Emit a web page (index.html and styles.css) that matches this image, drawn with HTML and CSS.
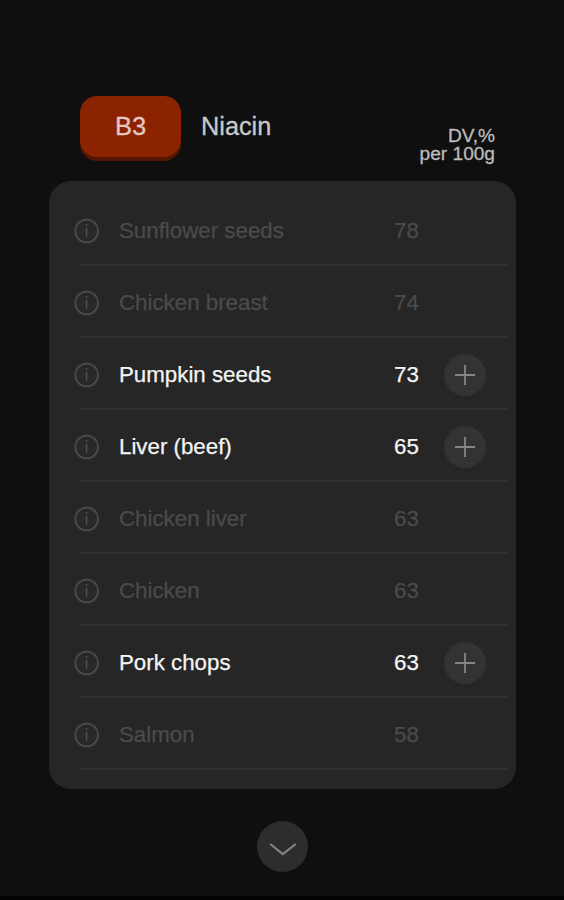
FILE: index.html
```html
<!DOCTYPE html>
<html lang="en">
<head>
<meta charset="utf-8">
<title>Niacin</title>
<link rel="stylesheet" href="styles.css">
</head>
<body>
<svg class="defs" width="0" height="0">
  <symbol id="info" viewBox="0 0 26 26"><circle cx="12.6" cy="13" r="11.4"/><path d="M12.6 9.7V18.7M12.6 5.9V7.9"/></symbol>
  <symbol id="plus" viewBox="0 0 42 42"><path d="M11 21H31M21 11V31"/></symbol>
</svg>
<main class="screen">
  <header class="header">
    <span class="badge">B3</span>
    <h1 class="title">Niacin</h1>
    <p class="unit">DV,%<br>per 100g</p>
  </header>
  <ul class="list">
    <li class="row"><svg class="info"><use href="#info"/></svg><span class="name">Sunflower seeds</span><span class="value">78</span></li>
    <li class="row"><svg class="info"><use href="#info"/></svg><span class="name">Chicken breast</span><span class="value">74</span></li>
    <li class="row active"><svg class="info"><use href="#info"/></svg><span class="name">Pumpkin seeds</span><span class="value">73</span><button class="add" aria-label="Add"><svg><use href="#plus"/></svg></button></li>
    <li class="row active"><svg class="info"><use href="#info"/></svg><span class="name">Liver (beef)</span><span class="value">65</span><button class="add" aria-label="Add"><svg><use href="#plus"/></svg></button></li>
    <li class="row"><svg class="info"><use href="#info"/></svg><span class="name">Chicken liver</span><span class="value">63</span></li>
    <li class="row"><svg class="info"><use href="#info"/></svg><span class="name">Chicken</span><span class="value">63</span></li>
    <li class="row active"><svg class="info"><use href="#info"/></svg><span class="name">Pork chops</span><span class="value">63</span><button class="add" aria-label="Add"><svg><use href="#plus"/></svg></button></li>
    <li class="row"><svg class="info"><use href="#info"/></svg><span class="name">Salmon</span><span class="value">58</span></li>
  </ul>
  <button class="more" aria-label="More"><svg viewBox="0 0 50 50"><path d="M13 22.5L25.3 32.5L38 22.5"/></svg></button>
</main>
</body>
</html>
```
FILE: styles.css
```css
* { box-sizing: border-box; }
body { margin: 0; background: #0f0f0f; font-family: "Liberation Sans", Arial, sans-serif; }
.defs { display: block; }
.screen { height: 900px; padding: 96px 48px 0 49px; border-bottom: 4px solid #050204; overflow: hidden; }
.header { display: flex; height: 85px; padding: 0 21px 0 31px; -webkit-text-stroke: .3px; }
.badge { width: 101px; height: 61px; border-radius: 17px; background: #8b2200; box-shadow: 0 4px 0 #521602; color: #e6c6c3; font-size: 25.5px; line-height: 61px; text-align: center; }
.title { margin: 0 0 0 20px; color: #c8c8c8; font-size: 25.3px; font-weight: 400; line-height: 61px; }
.unit { margin: 31px 0 0 auto; color: #bcbcbc; font-size: 19.1px; line-height: 18px; text-align: right; }
.list { height: 608px; margin: 0; padding: 13px 0 0; border-radius: 22px; background: #262626; list-style: none; }
.row { display: grid; grid-template-columns: 26px 274px 50px 42px; align-items: center; height: 72px; padding: 2px 0 0 25px; color: #4b4b4b; font-size: 22.3px; line-height: 26px; background: linear-gradient(#2f2f2f, #2f2f2f) 31px 70px / 428px 2px no-repeat; -webkit-text-stroke: .25px; }
.info { width: 26px; height: 26px; fill: none; stroke: #4b4b4b; stroke-width: 1.7; border-radius: 50%; background: #292929; box-shadow: 0 0 3px 2px #292929; }
.name { padding-left: 19px; }
.value { padding-left: 20px; }
.active { color: #f4f4f4; }
.add { display: block; width: 42px; height: 42px; margin-left: 20px; padding: 0; border: 0; border-radius: 50%; background: #333; }
.add svg { display: block; width: 42px; height: 42px; stroke: #858585; stroke-width: 1.8; }
.more { display: block; width: 51px; height: 51px; margin: 32px 0 0 208px; padding: 0; border: 0; border-radius: 50%; background: #2d2d2d; }
.more svg { display: block; fill: none; stroke: #858585; stroke-width: 2; }
```
